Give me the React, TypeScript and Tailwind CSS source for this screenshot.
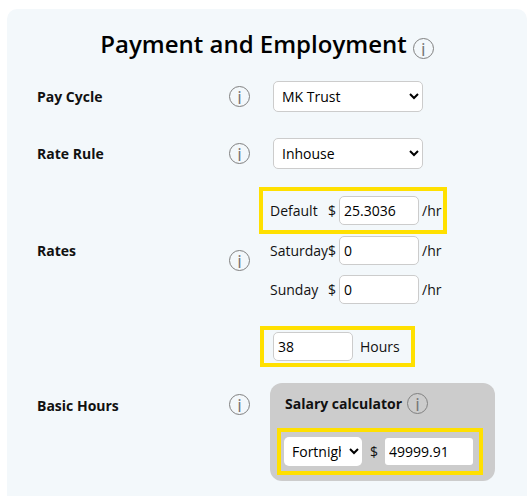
const font = { fontFamily: '"Open Sans", sans-serif' };

function Info({ className = "" }: { className?: string }) {
  return (
    <span className={`flex h-[21px] w-[21px] shrink-0 items-center justify-center rounded-full border border-[#808080] text-[18px] leading-none font-normal text-[#777777] ${className}`}>
      i
    </span>
  );
}

function Rate({ label, value }: { label: string; value: string }) {
  return (
    <div className="flex h-[29px] items-center">
      <span className="w-[58px] text-[14px]">{label}</span>
      <span className="w-[11px] text-[14px]">$</span>
      <input readOnly value={value} className="h-[29px] w-[80px] rounded-[5px] border border-[#cccccc] bg-white px-1 text-[14px] text-black" />
      <span className="ml-[3px] text-[14px]">/hr</span>
    </div>
  );
}

function Select({ value }: { value: string }) {
  return (
    <select className="h-[31px] w-[150px] rounded-[5px] border border-[#cccccc] bg-white pl-[4px] text-[14px] text-black" defaultValue={value}>
      <option>{value}</option>
    </select>
  );
}

export default function App() {
  return (
    <div className="h-[496px] w-[532px] overflow-hidden bg-white pt-[9px] pl-[7px] text-[#111111]" style={font}>
      <div className="h-[487px] w-[520px] rounded-t-[10px] bg-[#f3f8fb]">
        <div className="flex h-[72px] items-end justify-center gap-[6px] pb-[21px]">
          <h1 className="text-[24px] leading-[33px] font-semibold text-black">Payment and Employment</h1>
          <Info className="mb-[1px]" />
        </div>

        <div className="flex h-[31px] items-center pl-[30px]">
          <span className="w-[192px] text-[14px] font-bold">Pay Cycle</span>
          <Info />
          <span className="w-[23px]" />
          <Select value="MK Trust" />
        </div>

        <div className="mt-[26px] flex h-[31px] items-center pl-[30px]">
          <span className="w-[192px] text-[14px] font-bold">Rate Rule</span>
          <Info />
          <span className="w-[23px]" />
          <Select value="Inhouse" />
        </div>

        <div className="mt-[18px] flex pl-[30px]">
          <span className="mt-[54px] h-[20px] w-[192px] text-[14px] leading-[20px] font-bold">Rates</span>
          <Info className="mt-[63px]" />
          <div className="ml-[9px] flex flex-col">
            <div className="flex h-[47px] w-[188px] items-center border-4 border-[#ffe000] pl-[7px]">
              <Rate label="Default" value="25.3036" />
            </div>
            <div className="mt-[2px] ml-[11px]">
              <Rate label="Saturday" value="0" />
            </div>
            <div className="mt-[10px] ml-[11px]">
              <Rate label="Sunday" value="0" />
            </div>
          </div>
        </div>

        <div className="mt-[22px] ml-[253px] flex h-[41px] w-[155px] items-center border-4 border-[#ffe000] pl-[9px]">
          <input readOnly value="38" className="h-[29px] w-[80px] rounded-[5px] border border-[#cccccc] bg-white px-1 text-[14px] text-black" />
          <span className="ml-[7px] text-[14px]">Hours</span>
        </div>

        <div className="mt-[16px] flex pl-[30px]">
          <span className="mt-[13px] h-[20px] w-[192px] text-[14px] leading-[20px] font-bold">Basic Hours</span>
          <Info className="mt-[11px]" />
          <div className="ml-[20px] h-[98px] w-[225px] rounded-[12px] bg-[#cccccc] pt-[10px] pl-[7px]">
            <div className="flex items-center gap-[5px] pl-[8px]">
              <span className="text-[14px] font-bold">Salary calculator</span>
              <Info />
            </div>
            <div className="mt-[14px] flex h-[47px] w-[206px] items-center border-4 border-[#ffe000] pl-[3px]">
              <select className="h-[29px] w-[78px] rounded-[5px] bg-white pr-[5px] pl-[4px] text-[14px] text-black" defaultValue="Fortnightly">
                <option>Fortnightly</option>
              </select>
              <span className="ml-[8px] w-[15px] text-[14px]">$</span>
              <input readOnly value="49999.91" className="h-[27px] w-[88px] rounded-[3px] bg-white px-1 text-[14px] text-black" />
            </div>
          </div>
        </div>
      </div>
    </div>
  );
}
